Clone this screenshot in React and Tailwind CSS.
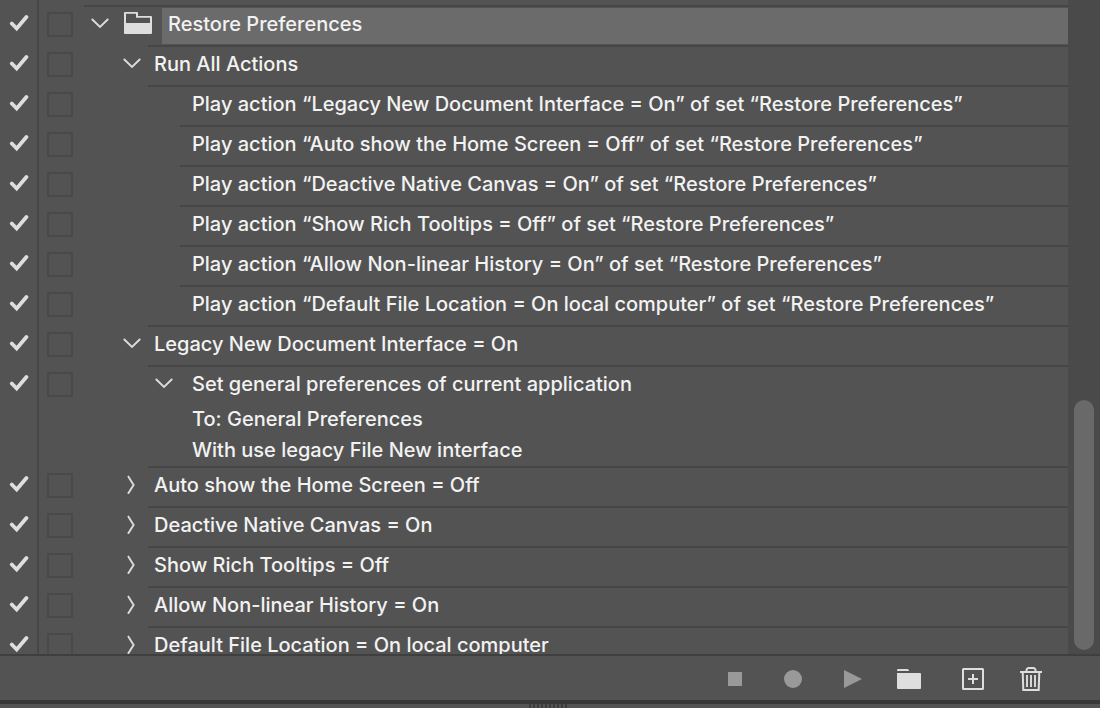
import React, { useState } from "react";

// Every row of the actions list, "line" is the level where the separator above it starts
const initialRows = [
  { id: 1, level: 0, line: 0, label: "Restore Preferences", arrow: "open", folder: true },
  { id: 2, level: 1, line: 1, label: "Run All Actions", arrow: "open" },
  { id: 3, level: 2, line: 1, label: "Play action “Legacy New Document Interface = On” of set “Restore Preferences”" },
  { id: 4, level: 2, line: 2, label: "Play action “Auto show the Home Screen = Off” of set “Restore Preferences”" },
  { id: 5, level: 2, line: 2, label: "Play action “Deactive Native Canvas = On” of set “Restore Preferences”" },
  { id: 6, level: 2, line: 2, label: "Play action “Show Rich Tooltips = Off” of set “Restore Preferences”" },
  { id: 7, level: 2, line: 2, label: "Play action “Allow Non-linear History = On” of set “Restore Preferences”" },
  { id: 8, level: 2, line: 2, label: "Play action “Default File Location = On local computer” of set “Restore Preferences”" },
  { id: 9, level: 1, line: 1, label: "Legacy New Document Interface = On", arrow: "open" },
  {
    id: 10,
    level: 2,
    line: 1,
    label: "Set general preferences of current application",
    arrow: "open",
    details: ["To: General Preferences", "With use legacy File New interface"],
  },
  { id: 11, level: 1, line: 1, label: "Auto show the Home Screen = Off", arrow: "closed" },
  { id: 12, level: 1, line: 1, label: "Deactive Native Canvas = On", arrow: "closed" },
  { id: 13, level: 1, line: 1, label: "Show Rich Tooltips = Off", arrow: "closed" },
  { id: 14, level: 1, line: 1, label: "Allow Non-linear History = On", arrow: "closed" },
  { id: 15, level: 1, line: 1, label: "Default File Location = On local computer", arrow: "closed" },
];

const indents = ["ml-0", "ml-8", "ml-16"];
const lineIndents = ["ml-0", "ml-16", "ml-24"];
const textPaddings = ["pl-1.5", "pl-1.5", "pl-3"];

function Arrow({ open }) {
  return (
    <svg width="20" height="20" viewBox="0 0 20 20" fill="none" stroke="#dcdcdc" strokeWidth="1.9">
      {open ? <path d="M1.800 6l8.200 8 8.200-8" /> : <path d="M6 2L11.600 11 6 19.800" />}
    </svg>
  );
}

function ActionRow({ row, selected, onSelect }) {
  const [enabled, setEnabled] = useState(true);
  const [dialog, setDialog] = useState(false);

  return (
    <li className="flex shrink-0">
      <label className="w-[39px] shrink-0 border-r-2 border-[#464646] pt-2 pl-[9px]">
        <input
          type="checkbox"
          className="peer sr-only"
          aria-label={"Toggle " + row.label}
          checked={enabled}
          onChange={() => setEnabled(!enabled)}
        />
        <svg className="invisible peer-checked:visible" width="20" height="20" viewBox="0 0 20 20" fill="none">
          <path d="M2.800 10.500l4.900 5L17.400 4" stroke="#dedede" strokeWidth="3.800" strokeLinecap="round" />
        </svg>
      </label>
      <div className="w-[45px] shrink-0 pt-[7px] pl-2">
        <input
          type="checkbox"
          className="block h-[25px] w-[26px] appearance-none rounded-[1px] border-2 border-[#494949] checked:bg-[#6b6b6b]"
          aria-label={"Dialog for " + row.label}
          checked={dialog}
          onChange={() => setDialog(!dialog)}
        />
      </div>
      <div className="min-w-0 flex-1">
        <div className={`h-0.5 bg-[#464646] ${lineIndents[row.line]}`} />
        <div className={`flex items-start ${row.details ? "h-[37px]" : "h-[38px]"} ${indents[row.level]}`}>
          {row.arrow ? (
            <button
              type="button"
              className="flex h-8 w-8 shrink-0 items-center justify-center"
              aria-label={(row.arrow === "open" ? "Collapse " : "Expand ") + row.label}
            >
              <Arrow open={row.arrow === "open"} />
            </button>
          ) : (
            <span className="w-8 shrink-0" />
          )}
          {row.folder && (
            <svg className="mt-1 mr-2.5 ml-2 shrink-0" width="28" height="24" viewBox="0 0 28 24">
              <path
                fill="#dedede"
                fillRule="evenodd"
                d="M1 1h12a1 1 0 0 1 1 1v3H27a1 1 0 0 1 1 1v16a1 1 0 0 1-1 1H1a1 1 0 0 1-1-1V2a1 1 0 0 1 1-1zM2 2.700V12h24V6.700H12V2.700z"
              />
            </svg>
          )}
          <button
            type="button"
            onClick={onSelect}
            className={`mt-px h-9 min-w-0 flex-1 truncate pb-1 text-left leading-[30px] ${textPaddings[row.level]} ${
              selected ? "bg-[#6b6b6b]" : ""
            }`}
          >
            {row.label}
          </button>
        </div>
        {row.details && (
          <div className="ml-24 pl-3">
            {row.details.map((text) => (
              <p key={text} className="truncate leading-[31px]">
                {text}
              </p>
            ))}
          </div>
        )}
      </div>
    </li>
  );
}

function ToolButton({ label, disabled, children }) {
  return (
    <button
      type="button"
      aria-label={label}
      disabled={disabled}
      className="flex h-full w-[58px] items-center justify-center text-[#dedede] disabled:text-[#999999]"
    >
      <svg width="28" height="28" viewBox="0 0 28 28" fill="currentColor">
        {children}
      </svg>
    </button>
  );
}

function Toolbar() {
  return (
    <div className="flex h-[46px] shrink-0 items-center justify-end border-t-2 border-[#3f3f3f] pt-px pr-10">
      <ToolButton label="Stop" disabled>
        <path d="M7 7h14v14H7z" />
      </ToolButton>
      <ToolButton label="Record" disabled>
        <circle cx="14" cy="14" r="9" />
      </ToolButton>
      <ToolButton label="Play" disabled>
        <path d="M7 5l18 9-18 9z" />
      </ToolButton>
      <ToolButton label="New set">
        <path d="M2 6V5.200a1.200 1.200 0 0 1 1.200-1.200H13l1.200 2zM2 8h23a1 1 0 0 1 1 1v14a1 1 0 0 1-1 1H3a1 1 0 0 1-1-1z" />
      </ToolButton>
      <div className="ml-1.5 flex h-full">
        <ToolButton label="New action">
          <rect x="4" y="4" width="20" height="20" rx="0.5" fill="none" stroke="currentColor" strokeWidth="2" />
          <path d="M13 9h2v4h4v2h-4v4h-2v-4H9v-2h4z" />
        </ToolButton>
        <ToolButton label="Delete">
          <g fill="none" stroke="currentColor" strokeWidth="2">
            <path d="M3 7h22M9.500 7V5.200A2.200 2.200 0 0 1 11.700 3h4.600a2.200 2.200 0 0 1 2.200 2.200V7M5.700 7l.6 18h15.400l.6-18" />
            <path d="M10 10v12M14 10v12M18 10v12" strokeWidth="1.900" />
          </g>
        </ToolButton>
      </div>
    </div>
  );
}

function App() {
  const [selectedId, setSelectedId] = useState(1); // Row that is highlighted

  return (
    <div className="flex h-screen flex-col overflow-hidden bg-[#535353] font-['Inter',sans-serif] text-xl font-medium text-[#f2f2f2]">
      <div className="flex min-h-0 flex-1">
        <ul className="flex min-w-0 flex-1 flex-col overflow-hidden">
          {/* End of the row that is scrolled out */}
          <li className="h-[5px] w-[39px] shrink-0 border-r-2 border-[#464646]" />
          {initialRows.map((row) => (
            <ActionRow
              key={row.id}
              row={row}
              selected={row.id === selectedId}
              onSelect={() => setSelectedId(row.id)}
            />
          ))}
        </ul>
        {/* Scrollbar */}
        <div className="flex w-8 shrink-0 flex-col justify-end bg-[#4a4a4a] px-1.5 pb-1">
          <div className="h-[250px] rounded-full bg-[#696969]" />
        </div>
      </div>
      <Toolbar />
      {/* Resize handle */}
      <div className="flex h-2 shrink-0 justify-center gap-0.5 border-t-4 border-[#383838] pr-1">
        {[...Array(10)].map((_, i) => (
          <span key={i} className="w-0.5 bg-[#3d3d3d]" />
        ))}
      </div>
    </div>
  );
}

export default App;
